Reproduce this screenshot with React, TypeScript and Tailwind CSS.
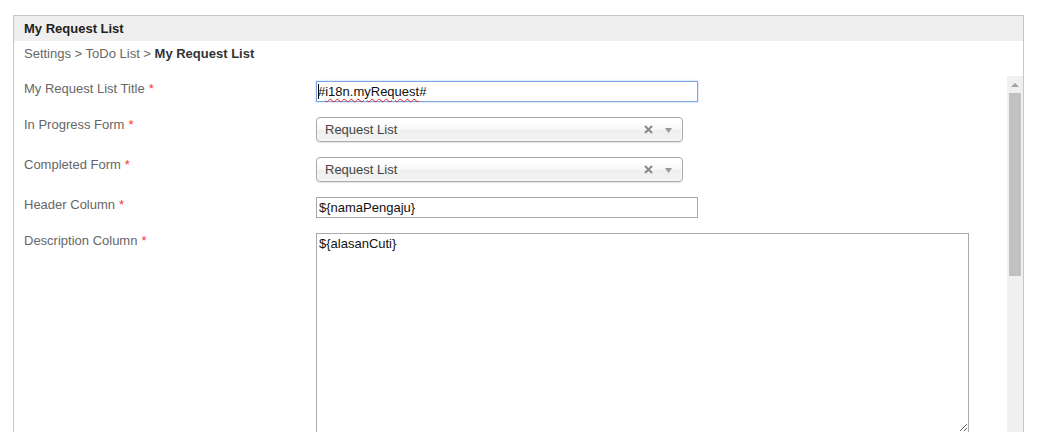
import React from "react";

const Req = () => <span className="text-[#ff3333] ml-[4px]">*</span>;

function Label({ text }: { text: string }) {
  return (
    <div className="w-[292px] shrink-0 leading-[15px] text-[#666]">
      {text}
      <Req />
    </div>
  );
}

function Select() {
  return (
    <div className="w-[367px] h-[25px] rounded-[4px] border border-[#aaa] bg-[linear-gradient(to_bottom,#ffffff_20%,#f6f6f6_50%,#eeeeee_52%,#f4f4f4_100%)] flex items-center pl-[8px] pr-[10px] text-[#444] shadow-[0_0_3px_#fff_inset,0_1px_1px_rgba(0,0,0,0.1)]">
      <span className="flex-1 leading-[15px]">Request List</span>
      <svg width="9" height="9" viewBox="0 0 9 9" className="mr-[12px]">
        <path d="M1 1 L8 8 M8 1 L1 8" stroke="#888" strokeWidth="2" strokeLinecap="butt" />
      </svg>
      <svg width="7" height="5" viewBox="0 0 7 5" className="mt-[1px]">
        <path d="M0 0 L7 0 L3.5 5 Z" fill="#999" />
      </svg>
    </div>
  );
}

export default function App() {
  return (
    <div className="h-[432px] overflow-hidden bg-white pt-[15px] pl-[13px] font-['Liberation_Sans',Arial,sans-serif] text-[13px]">
      <div className="w-[1011px] h-[430px] border border-[#c6c6c6] flex flex-col">
        <div className="h-[25px] shrink-0 bg-[#efefef] px-[10px] flex items-center font-bold text-[#222]">
          My Request List
        </div>
        <div className="h-[35px] shrink-0 px-[10px] pt-[5px] leading-[15px] text-[#666]">
          Settings &gt; ToDo List &gt; <span className="font-bold text-[#333]">My Request List</span>
        </div>
        <div className="flex-1 flex min-h-0">
          <div className="flex-1 pl-[10px] pt-[5px] flex flex-col gap-[15px]">
            <div className="flex">
              <Label text="My Request List Title" />
              <div className="w-[382px] h-[21px] border border-[#7ea7e2] shadow-[0_0_2px_#a9c4ee] flex items-center pl-[1px] text-[#111] leading-[15px]">
                <span className="inline-block w-px h-[15px] bg-black mr-[-1px] relative z-10" />
                <span>#</span>
                <span className="underline decoration-wavy decoration-[#e02020] decoration-[1px] underline-offset-[2px]">i18n.myRequest</span>
                <span>#</span>
              </div>
            </div>
            <div className="flex">
              <Label text="In Progress Form" />
              <Select />
            </div>
            <div className="flex">
              <Label text="Completed Form" />
              <Select />
            </div>
            <div className="flex">
              <Label text="Header Column" />
              <div className="w-[382px] h-[21px] border border-[#a9a9a9] flex items-center pl-[2px] text-[#111] leading-[15px]">
                {"${namaPengaju}"}
              </div>
            </div>
            <div className="flex">
              <Label text="Description Column" />
              <textarea
                defaultValue={"${alasanCuti}"}
                spellCheck={false}
                className="w-[653px] h-[200px] border border-[#a9a9a9] px-[2px] pt-[2px] text-[#111] leading-[15px] outline-none font-['Liberation_Sans',Arial,sans-serif] text-[13px]"
              />
            </div>
          </div>
          <div className="w-[16px] shrink-0 bg-[#f0f0f0] flex flex-col">
            <div className="h-[17px] flex items-center justify-center">
              <svg width="8" height="4" viewBox="0 0 8 4">
                <path d="M0 4 L8 4 L4 0 Z" fill="#a3a3a3" />
              </svg>
            </div>
            <div className="h-[183px] mx-[2px] bg-[#c1c1c1]" />
            <div className="flex-1" />
            <div className="h-[17px] flex items-center justify-center">
              <svg width="8" height="4" viewBox="0 0 8 4">
                <path d="M0 0 L8 0 L4 4 Z" fill="#505050" />
              </svg>
            </div>
          </div>
        </div>
      </div>
    </div>
  );
}
